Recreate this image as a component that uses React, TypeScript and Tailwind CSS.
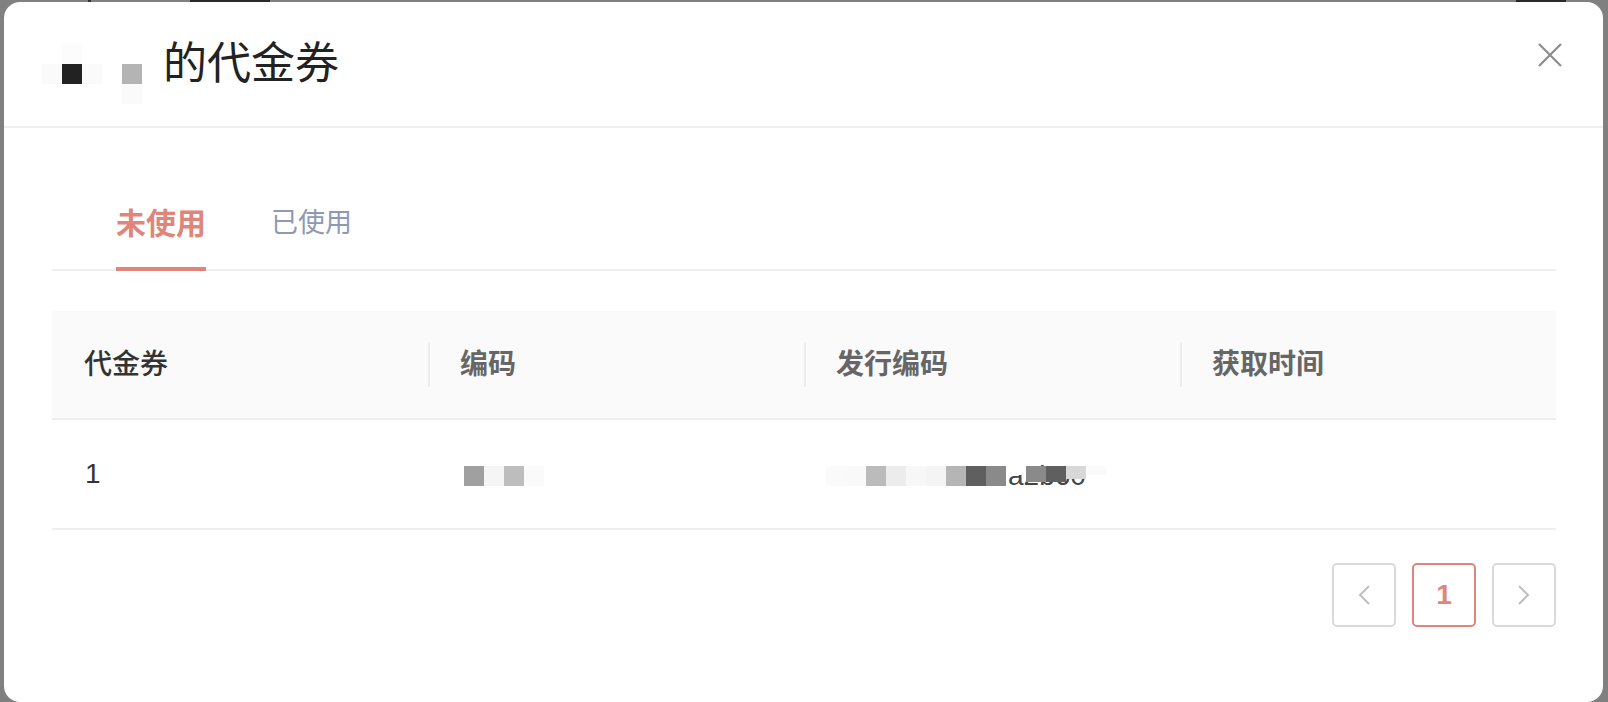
import React from 'react';

const FONT = { fontFamily: '"Liberation Sans", "Noto Sans CJK SC", sans-serif' };

// pixel mosaic over the owner name in the title (6 x 3 grid of 20px cells)
const TITLE_MOSAIC = [
  ['', '#fcfcfc', '', '', '', ''],
  ['#fafafa', '#222222', '#fafafa', '', '#b4b4b4', ''],
  ['', '', '', '', '#fafafa', ''],
];

const CODE_MOSAIC = ['#a0a0a0', '#f5f5f5', '#bdbdbd', '#fafafa'];

const ISSUE_MOSAIC = [
  { c: '#fafafa', h: 'h-[20px]' },
  { c: '#f9f9f9', h: 'h-[20px]' },
  { c: '#bbbbbb', h: 'h-[20px]' },
  { c: '#ececec', h: 'h-[20px]' },
  { c: '#f7f7f7', h: 'h-[20px]' },
  { c: '#f4f4f4', h: 'h-[20px]' },
  { c: '#b5b5b5', h: 'h-[20px]' },
  { c: '#5f5f5f', h: 'h-[20px]' },
  { c: '#8a8a8a', h: 'h-[20px]' },
  { c: '#ffffff', h: 'h-[9px]' },
  { c: '#8a8a8a', h: 'h-[16px]' },
  { c: '#5f5f5f', h: 'h-[16px]' },
  { c: '#d8d8d8', h: 'h-[13px]' },
  { c: '#fafafa', h: 'h-[9px]' },
];

const COLUMNS = ['代金券', '编码', '发行编码', '获取时间'];

export default function App() {
  return (
    <div className="relative w-[1608px] h-[702px] bg-[#808080] pt-[2px] pl-[4px] overflow-hidden" style={FONT}>
      {/* bits of the page behind the dialog */}
      <div className="absolute top-0 left-[88px] w-[3px] h-[2px] bg-[#333]" />
      <div className="absolute top-0 left-[190px] w-[80px] h-[2px] bg-[#2a2a2a]" />
      <div className="absolute top-0 left-[1516px] w-[50px] h-[2px] bg-[#2a2a2a]" />

      <div className="relative w-[1599px] h-[700px] bg-white rounded-[16px] flex flex-col">
        {/* header */}
        <div className="h-[126px] border-b-2 border-[#efefef] flex items-start justify-between pl-[38px] pr-[41px]">
          <div className="flex items-center h-[124px]">
            <div className="flex flex-col mt-[20px]">
              {TITLE_MOSAIC.map((row, i) => (
                <div key={i} className="flex">
                  {row.map((c, j) => (
                    <div key={j} className="w-[20px] h-[20px]" style={{ backgroundColor: c || 'transparent' }} />
                  ))}
                </div>
              ))}
            </div>
            <span className="text-[44px] leading-none text-[#222] ml-[1px]">的代金券</span>
          </div>
          <svg className="mt-[41px]" width="24" height="24" viewBox="0 0 24 24" fill="none">
            <path d="M1 1 L23 23 M23 1 L1 23" stroke="#8c8c8c" strokeWidth="2.2" />
          </svg>
        </div>

        {/* body */}
        <div className="pl-[48px] pr-[47px]">
          <div className="mt-[73px] flex border-b-2 border-[#efefef]">
            <div className="ml-[64px] -mb-[2px] pb-[21px] border-b-4 border-[#e0857a] text-[30px] leading-[45px] font-bold text-[#e0857a]">
              未使用
            </div>
            <div className="ml-[65px] -mb-[2px] pb-[21px] border-b-4 border-transparent text-[27px] leading-[45px] text-[#8e99b4]">
              已使用
            </div>
          </div>

          {/* table */}
          <div className="mt-[40px]">
            <div className="grid grid-cols-4 h-[109px] bg-[#fafafa] border-b-2 border-[#eeeeee]">
              {COLUMNS.map((col, i) => (
                <div key={col} className="flex items-center">
                  {i === 0 ? (
                    <span className="pl-[32px] text-[28px] font-medium text-[#333]">{col}</span>
                  ) : (
                    <>
                      <div className="w-[2px] h-[45px] bg-[#ececec]" />
                      <span className="ml-[30px] text-[28px] font-semibold text-[#666]">{col}</span>
                    </>
                  )}
                </div>
              ))}
            </div>

            <div className="grid grid-cols-4 h-[110px] border-b-2 border-[#eeeeee]">
              <div className="flex items-center pl-[33px] text-[28px] text-[#333]">1</div>
              <div className="flex items-center pl-[36px]">
                <div className="flex mt-[4px]">
                  {CODE_MOSAIC.map((c, i) => (
                    <div key={i} className="w-[20px] h-[20px]" style={{ backgroundColor: c }} />
                  ))}
                </div>
              </div>
              <div className="flex items-center pl-[22px]">
                <div className="relative flex items-start h-[20px] mt-[4px]">
                  <span className="absolute left-[182px] top-0 text-[28px] leading-[20px] text-[#444]">a2b60</span>
                  {ISSUE_MOSAIC.map((b, i) => (
                    <div key={i} className={`relative w-[20px] ${b.h}`} style={{ backgroundColor: b.c }} />
                  ))}
                </div>
              </div>
              <div />
            </div>
          </div>

          {/* pagination */}
          <div className="mt-[33px] flex justify-end gap-[16px]">
            <div className="w-[64px] h-[64px] border-2 border-[#d9d9d9] rounded-[5px] flex items-center justify-center">
              <svg width="14" height="22" viewBox="0 0 14 22" fill="none">
                <path d="M12 2 L3 11 L12 20" stroke="#bfbfbf" strokeWidth="2" />
              </svg>
            </div>
            <div className="w-[64px] h-[64px] border-2 border-[#e0857a] rounded-[5px] flex items-center justify-center text-[28px] font-bold text-[#e0857a]">
              1
            </div>
            <div className="w-[64px] h-[64px] border-2 border-[#d9d9d9] rounded-[5px] flex items-center justify-center">
              <svg width="14" height="22" viewBox="0 0 14 22" fill="none">
                <path d="M2 2 L11 11 L2 20" stroke="#bfbfbf" strokeWidth="2" />
              </svg>
            </div>
          </div>
        </div>
      </div>
    </div>
  );
}
